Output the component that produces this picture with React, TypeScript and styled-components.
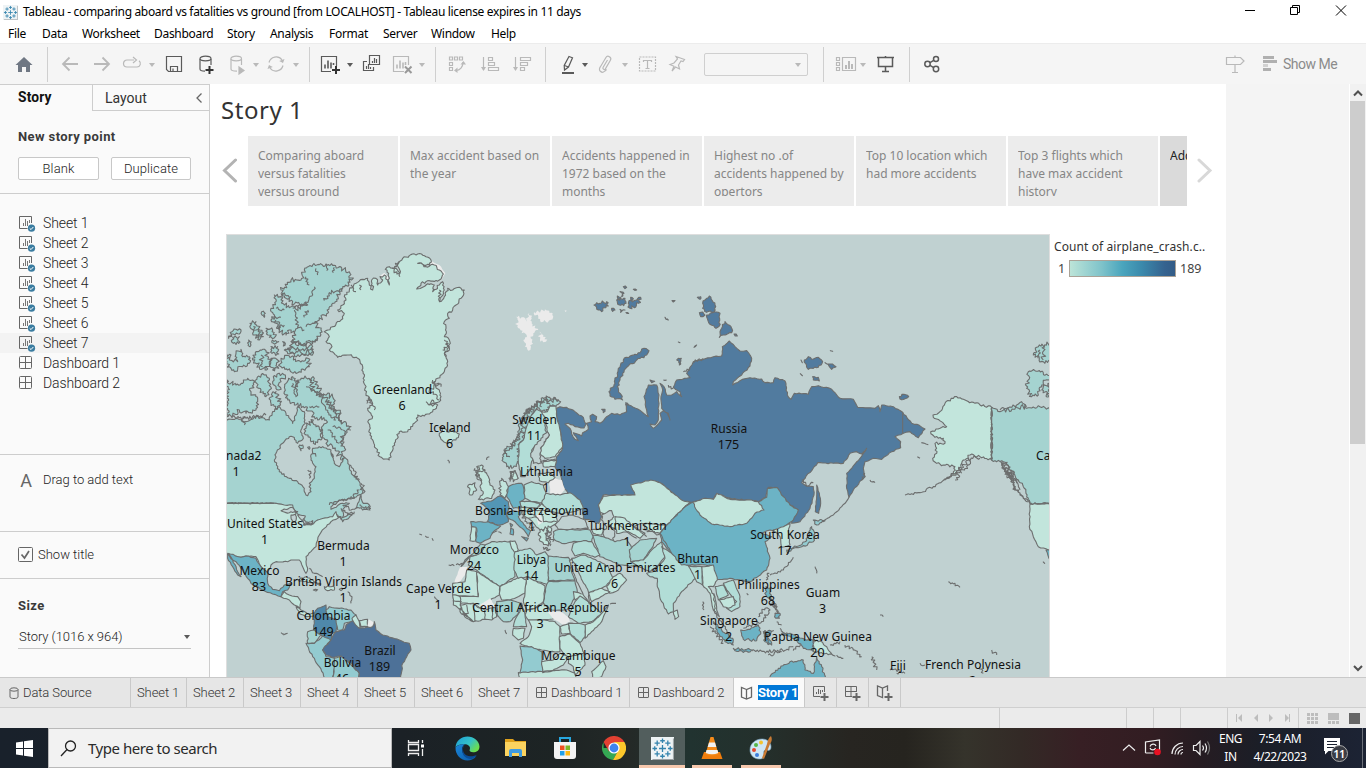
import React from "react";
import styled, { createGlobalStyle, css } from "styled-components";

const Global = createGlobalStyle`
  html, body { margin: 0; padding: 0; background: #fff; overflow: hidden; }
  * { box-sizing: border-box; }
`;

const system = `"Noto Sans", "Open Sans", sans-serif`;
const book = `"Noto Sans", "Open Sans", sans-serif`;
const ui = `Roboto, "Liberation Sans", sans-serif`;

/* ---------- window chrome ---------- */
const Window = styled.div`
  width: 1366px; height: 768px; display: flex; flex-direction: column;
  overflow: hidden; background: #fff; font-family: ${ui}; color: #333;
`;
const TitleBar = styled.div`
  height: 24px; flex: none; display: flex; align-items: center; padding: 0 18px 0 3px;
  font: 12px ${system}; letter-spacing: -0.34px; color: #000;
`;
const TitleText = styled.span`flex: 1; margin: -2px 0 0 5px; white-space: nowrap;`;
const WinButtons = styled.svg`width: 104px; height: 24px; display: block;`;
const MenuBar = styled.div`
  height: 19px; flex: none; display: flex; align-items: center; padding-left: 8px;
  font: 12px ${system}; letter-spacing: -0.3px; color: #000;
`;
const MenuItem = styled.span<{ $w: number }>`width: ${(p) => p.$w}px; white-space: nowrap;`;

/* ---------- toolbar ---------- */
const Toolbar = styled.div`
  height: 41px; flex: none; display: flex; align-items: center;
  background: #f5f5f5; border-top: 1px solid #ececec;
`;
const Tool = styled.svg<{ $ml: number; $dim?: boolean }>`
  width: 22px; height: 22px; flex: none; display: block; margin-left: ${(p) => p.$ml}px;
  fill: none; stroke: ${(p) => (p.$dim ? "#b9b9b9" : "#5a5a5a")}; stroke-width: 1.2;
`;
const Caret = styled.i<{ $ml: number; $dim?: boolean }>`
  flex: none; width: 6px; height: 0; margin: 1px 1px 0 ${(p) => p.$ml}px;
  border: 3px solid transparent; border-bottom: 0;
  border-top: 4px solid ${(p) => (p.$dim ? "#b9b9b9" : "#5a5a5a")};
`;
const Sep = styled.i<{ $ml: number }>`
  width: 1px; height: 35px; flex: none; background: #cfcfcf; margin-left: ${(p) => p.$ml}px;
`;
const FitSelect = styled.div`
  width: 104px; height: 23px; margin-left: 16px; flex: none; border: 1px solid #cfcfcf; border-radius: 2px;
  display: flex; align-items: center; justify-content: flex-end; padding-right: 5px;
`;
const ShowMe = styled.div`
  display: flex; align-items: center; gap: 6px; margin: 0 28px 0 17px;
  font: 14px ${ui}; color: #8b8b8b; letter-spacing: -0.5px; white-space: nowrap;
`;

/* ---------- side panel ---------- */
const Main = styled.div`flex: 1; min-height: 0; display: flex; background: #fff;`;
const Side = styled.aside`
  width: 210px; flex: none; background: #fafafa; border-right: 1px solid #cdcdcd;
  display: flex; flex-direction: column;
`;
const PaneTabs = styled.div`display: flex; height: 27px; flex: none; border-top: 1px solid #cdcdcd;`;
const PaneTab = styled.div<{ $on?: boolean }>`
  display: flex; align-items: center; font-size: 14px; padding-bottom: 1px;
  ${(p) => p.$on
    ? css`width: 92px; padding: 0 0 2px 18px; font-weight: 700; color: #111; font-size: 13.8px; letter-spacing: 0.15px;`
    : css`flex: 1; padding: 0 6px 0 12px; border-left: 1px solid #cdcdcd; border-bottom: 1px solid #cdcdcd;
          justify-content: space-between; color: #333; background: #fafafa;`}
`;
const Heading = styled.h3`
  margin: 0; font: 700 13px/17px ${ui}; color: #3a3a3a; letter-spacing: 0.4px;
`;
const NewPoint = styled.section`
  height: 83px; flex: none; padding: 17px 18px 0; border-bottom: 1px solid #cdcdcd;
`;
const Buttons = styled.div`display: flex; gap: 12px; margin-top: 12px;`;
const PointButton = styled.button<{ $w: number }>`
  width: ${(p) => p.$w}px; height: 23px; padding: 0 0 1px; background: #fff; border: 1px solid #c8c8c8; border-radius: 2px;
  font: 300 13px ${ui}; color: #222; letter-spacing: 0.1px;
`;
const SheetList = styled.ul`
  list-style: none; margin: 0; padding: 19px 0 0; height: 261px; flex: none; border-bottom: 1px solid #cdcdcd;
`;
const SheetRow = styled.li<{ $hover?: boolean }>`
  height: 20px; display: flex; align-items: center; gap: 7px; padding-left: 18px;
  font-size: 14px; font-weight: 300; letter-spacing: -0.1px; color: #222; background: ${(p) => (p.$hover ? "#f3f3f3" : "none")};
  svg { width: 18px; height: 18px; }
`;
const DragText = styled.section`
  height: 77px; flex: none; padding: 17px 0 0 19px; display: flex; align-items: flex-start; gap: 10px;
  border-bottom: 1px solid #cdcdcd; font-size: 13px; font-weight: 300; line-height: 16px; letter-spacing: -0.02px; color: #222;
`;
const BigA = styled.span`font: 18px/17px ${ui}; width: 14px; text-align: center; color: #666;`;
const ShowTitle = styled.section`
  height: 47px; flex: none; display: flex; align-items: center; gap: 5px; padding: 0 0 1px 18px;
  border-bottom: 1px solid #cdcdcd; font-size: 13px; font-weight: 300; color: #222;
`;
const SizeBox = styled.section`padding: 18px 18px 0; flex: 1;`;
const SizeSelect = styled.div`
  display: flex; align-items: center; justify-content: space-between; height: 25px; margin-top: 10px;
  border-bottom: 1px solid #c4c4c4; padding-left: 1px; font-size: 13px; font-weight: 300; letter-spacing: -0.05px; width: 173px; color: #222;
`;

/* ---------- story ---------- */
const Story = styled.main`width: 1016px; flex: none; padding-left: 11px; display: flex; flex-direction: column; overflow: hidden;`;
const StoryTitle = styled.h1`
  margin: 8px 0 0; height: 44px; flex: none; font: 400 24px/35px ${book}; color: #333; letter-spacing: 0.55px;
`;
const Navigator = styled.div`display: flex; align-items: center; height: 70px; flex: none;`;
const Arrow = styled.svg`width: 16px; height: 26px; margin-bottom: 2px; fill: none; stroke-width: 3; stroke-linecap: round;`;
const Cards = styled.div`display: flex; gap: 2px; width: 939px; margin: 0 10px 0 11px; overflow: hidden;`;
const Card = styled.div<{ $add?: boolean }>`
  width: 150px; height: 70px; flex: none; padding: 11px 0 0 10px;
  background: ${(p) => (p.$add ? "#dadada" : "#ececec")}; color: ${(p) => (p.$add ? "#222" : "#868686")};
`;
const CardText = styled.div`
  height: 49px; overflow: hidden; font: 12px/18px ${book}; white-space: pre; letter-spacing: -0.01px;
`;
const Board = styled.div`display: flex; margin: 28px 0 0 5px; flex: 1; min-height: 0;`;
const MapFrame = styled.div`width: 824px; flex: none; border: 1px solid #dedede; border-bottom: 0; overflow: hidden;`;
const MapSvg = styled.svg`display: block; width: 822px; height: 442px;`;
const Legend = styled.div`margin: 4px 0 0 4px; font: 12px/17px ${book}; color: #333; white-space: nowrap;`;
const LegendTitle = styled.div`letter-spacing: 0.09px;`;
const Ramp = styled.div`display: flex; align-items: center; gap: 4px; margin-top: 5px; padding-left: 4px; font-size: 12.5px; color: #444; span { width: 7px; }`;
const RampBar = styled.div`
  width: 107px; height: 17px; border: 1px solid #aaa297;
  background: linear-gradient(90deg, #bce4d8 0%, #7fc3ca 30%, #4aa5bd 50%, #3b8aac 68%, #35638f 90%, #335c87 100%);
`;
const Margin = styled.div`flex: 1; background: #f4f4f4; border-right: 1px solid #fff;`;
const Scroll = styled.div`width: 16px; flex: none; background: #f1f1f1; display: flex; flex-direction: column; align-items: center;`;
const Thumb = styled.div`width: 15px; height: 343px; background: #cdcdcd; align-self: flex-start;`;
const ScrollArrow = styled.svg`width: 16px; height: 17px; flex: none; fill: none; stroke: #505050; stroke-width: 2;`;
const ScrollDown = styled(ScrollArrow)`margin-top: auto;`;

/* ---------- sheet tabs and status ---------- */
const SheetTabs = styled.div`
  height: 31px; flex: none; display: flex; background: #e6e6e6; border-top: 1px solid #c9c9c9; border-bottom: 1px solid #cfcfcf;
`;
const SheetTab = styled.div<{ $w: number; $on?: boolean }>`
  width: ${(p) => p.$w}px; flex: none; display: flex; align-items: center; gap: 3px; padding-left: 6px;
  border-right: 1px solid #c9c9c9; font-size: 13px; font-weight: 300; letter-spacing: -0.1px; color: #333; white-space: nowrap;
  background: ${(p) => (p.$on ? "#fafafa" : "none")};
  svg { flex: none; fill: none; stroke: #666; }
`;
const Selected = styled.span`background: #0078d7; color: #fff; font-weight: 700; line-height: 15px; letter-spacing: -0.2px; margin-left: 1px;`;
const Status = styled.div`height: 20px; flex: none; display: flex; justify-content: flex-end; background: #ebebeb;`;
const StatusCell = styled.div<{ $w: number }>`
  width: ${(p) => p.$w}px; border-left: 1px solid #cdcdcd; display: flex; align-items: center;
`;

/* ---------- taskbar ---------- */
const Taskbar = styled.div`
  height: 40px; flex: none; display: flex; color: #fff;
  background: linear-gradient(90deg, #19212b 0, #1b2126 400px, #1d2424 560px, #242927 630px, #213330 690px, #24302c 760px, #272521 850px, #26241f 905px, #35332b 965px, #332a26 1020px, #371f24 1080px, #321d22 1150px, #261c22 1200px, #1b1e27 1260px, #1c2334 1366px);
`;
const Start = styled.div`width: 48px; display: grid; place-items: center;`;
const Search = styled.div`
  width: 344px; background: #f2f2f2; border: 1px solid #b9b9b9; color: #2b2b2b; display: flex; align-items: center;
  padding-left: 11px; gap: 11px; font: 15px ${system}; letter-spacing: -0.47px;
`;
const TaskCell = styled.div<{ $w: number; $on?: boolean; $open?: boolean }>`
  width: ${(p) => p.$w}px; display: grid; place-items: center; background: ${(p) => (p.$on ? "#525e5d" : "none")};
  box-shadow: ${(p) => (p.$open ? "inset 0 -3px #f6c8ad" : "none")};
`;
const Tray = styled.div`margin-left: auto; display: flex; align-items: center; font: 12px/18px ${system}; letter-spacing: -0.45px;`;
const TrayText = styled.div<{ $w: number }>`width: ${(p) => p.$w}px; text-align: center; white-space: nowrap;`;
const Edge = styled.i`width: 1px; height: 40px; background: #6b6f78; margin-right: 3px;`;

/* ---------- map data ---------- */
const tone: Record<string, string> = {
  g: "#c2e5dc", l: "#b2ddd7", c: "#a5d3d0", m: "#93cbd0", b: "#6cb3c5", f: "#5396b5",
  r: "#517b9f", z: "#4d7198", k: "#4f88aa", w: "#ebebeb", o: "#c0d1d1", n: "none",
};
type Shape = [string, number, string];
type Region = { x: number; y: number; shapes: Shape[] };

const noise = (a: number, b: number) => {
  const v = Math.sin(a * 12.9898 + b * 78.233) * 43758.5453;
  return v - Math.floor(v) - 0.5;
};

/** Turns a coarse outline into a coast: every segment is split and nudged sideways. */
const coast = (points: string, amp: number) => {
  const reach = amp >= 6 ? amp * 1.9 : amp >= 4 ? amp * 1.5 : amp * 1.2;
  const stride = amp >= 6 ? 4 : amp >= 4 ? 5 : 7;
  return points.split("|").map((part) => {
    const open = part.includes("~");
    const pts = part.replace("~", "").trim().split(/\s+/).map((p) => p.split(",").map(Number));
    const out: string[] = [];
    pts.forEach((p, i) => {
      out.push(`${p[0]} ${p[1]}`);
      if (open && i === pts.length - 1) return;
      const q = pts[(i + 1) % pts.length];
      const dx = q[0] - p[0], dy = q[1] - p[1];
      const len = Math.hypot(dx, dy);
      const steps = amp ? Math.floor(len / stride) : 0;
      const limit = Math.min(reach, len * 0.6);
      for (let s = 1; s < steps; s++) {
        const t = s / steps;
        const x = p[0] + dx * t, y = p[1] + dy * t;
        const k = noise(Math.round(x), Math.round(y)) * limit;
        out.push(`${(x - (dy / len) * k).toFixed(1)} ${(y + (dx / len) * k).toFixed(1)}`);
      }
    });
    return `M${out.join("L")}${open ? "" : "Z"}`;
  }).join("");
};

const russia =
  "290,385 300,380 320,382 345,395 370,412 378,432 372,444 345,440 325,430 315,432 330,445 335,462 345,478 355,482 348,470 340,458 352,462 365,468 368,458 385,448 380,430 395,425 390,408 398,403 410,410 405,425 420,430 440,410 455,400 480,405 500,395 497,372 520,382 545,395 565,410 560,390 552,350 565,315 590,315 597,345 597,370 595,400 595,420 585,435 570,432 580,445 595,432 605,420 600,400 610,392 625,400 630,420 622,400 605,385 603,350 608,330 600,310 612,320 620,345 635,345 650,335 665,350 660,335 640,322 650,300 690,293 680,280 690,262 700,245 735,236 760,230 785,228 787,200 808,183 825,200 840,213 860,212 875,235 870,258 845,285 820,305 818,315 840,302 870,293 905,297 915,308 940,308 945,293 975,303 982,345 993,358 1003,340 1045,343 1055,320 1075,317 1115,328 1140,355 1180,358 1193,382 1245,385 1255,377 1260,395 1265,375 1300,380 1328,397 1355,430 1378,436 1395,447 1375,473 1350,455 1330,460 1305,470 1322,485 1322,503 1295,515 1265,538 1240,535 1215,545 1210,565 1215,590 1205,600 1180,630 1167,652 1160,625 1160,580 1170,570 1200,535 1220,505 1205,522 1190,515 1170,520 1150,550 1120,550 1073,548 1030,600 1025,608 1040,618 1060,620 1062,645 1050,685 1020,725 995,730 995,712 1015,690 990,675 970,650 950,625 925,622 918,652 895,665 880,662 840,667 810,655 770,642 760,658 735,655 698,667 665,662 640,640 600,608 572,602 515,615 525,645 470,645 430,645 415,675 425,710 415,730 370,715 365,680 330,650 310,620 300,580 285,560 290,530 308,505 300,450 290,410";

const regions: Region[] = [
  {
    x: 226, y: 230, shapes: [
      ["w", 2, "462,138 475,128 492,150 490,172 480,160|610,90 640,105 658,130 645,152 630,140"],
      ["g", 5, "355,200 370,180 390,160 410,148 425,145 430,165 440,180 437,150 450,145 455,165 470,150 462,140 475,135 485,150 490,165 488,130 478,118 490,110 510,115 522,130 515,100 530,85 550,77 575,72 600,80 615,90 610,105 575,100 600,110 625,105 640,120 652,132 640,150 610,152 585,160 572,177 600,165 625,165 620,185 640,165 650,155 655,180 640,215 655,200 665,175 680,180 700,172 715,180 705,205 690,225 680,240 665,250 670,265 655,275 660,295 655,320 670,330 670,360 655,370 665,395 655,425 635,445 620,460 640,480 645,500 640,515 610,525 635,525 620,545 595,558 575,555 570,575 545,605 520,605 505,640 490,690 462,680 450,655 435,625 430,600 428,570 440,560 425,535 440,520 420,490 415,450 410,410 395,385 370,375 335,382 310,360 318,350 300,335 310,320 295,305 320,290 345,270 355,250 335,240 350,225 360,210"],
      ["c", 8, "165,180 195,150 225,150 235,120 260,105 300,102 340,110 372,130 377,150 350,175 320,220 305,250 280,270 265,280 285,300 275,325 260,340 225,345 200,330 205,310 190,300 180,315 160,300 150,280 135,270 145,255 135,235 150,215 145,195 165,200 175,225 210,238 245,225 240,220 205,222 180,205"],
      ["c", 8, "195,335 230,345 260,350 262,370 225,375 190,372 175,360 195,355|165,385 190,378 215,392 245,385 250,410 220,425 185,420 165,410|135,350 155,350 158,372 138,370|135,385 155,390 158,415 140,420|90,365 120,362 130,395 122,420 100,410 80,390|72,280 90,275 100,300 112,320 100,330 80,310|120,295 140,300 148,320 130,322|140,330 158,335 150,340 138,338|170,335 178,340 172,348|20,322 40,320 38,340 22,340|30,298 45,300 40,312 22,312 8,325 18,305|107,245 118,250 115,262 108,255|68,330 75,345 72,350|3,375 15,375 10,390 35,395 30,370 45,358 50,380 70,380 70,400 50,410 25,425 3,412"],
      ["c", 8, "3,450 30,465 50,460 65,445 80,450 75,485 95,510 90,540 60,550 40,540 20,555 3,560|95,440 115,435 130,445 130,480 120,500 105,480 92,460|142,440 160,430 178,435 165,455 158,480 150,470 140,455|138,490 150,485 162,520 155,535 135,520"],
      ["c", 4, "-12,570 30,565 60,575 90,560 130,570 140,545 160,530 180,550 200,580 210,555 215,530 235,545 238,580 225,600 232,625 215,640 200,620 190,620 170,640 150,670 145,690 160,725 190,745 215,755 235,775 235,785 245,797 255,785 250,760 265,745 270,710 255,690 260,655 290,650 315,660 322,680 315,670 325,700 340,710 350,695 350,680 365,690 370,715 380,735 400,755 412,780 410,790 380,805 345,810 315,830 315,838 350,820 370,820 350,840 350,870 335,855 320,860 270,875 255,885 240,875 200,840 150,820 -12,820"],
      ["c", 8, "180,460 200,440 215,470 225,445 265,445 275,465 285,490 320,500 325,530 345,550 345,575 375,590 360,610 345,620 355,650 350,690 320,650 300,640 290,600 300,570 265,560 240,530 210,525 185,510 175,485|240,590 262,570 270,590 290,600 285,630 262,640 240,615|218,650 230,645 225,662|245,652 250,650 250,658"],
      ["c", 5, "395,820 405,795 412,820 430,825 432,840 415,838 390,835|345,865 365,855 380,850 370,862 350,875"],
      ["n", 6, "~ 265,170 260,195 235,225 200,235|~ 240,140 250,165|~ 270,115 275,135|~ 300,105 302,122|~ 325,112 322,128|~ 350,178 310,188 295,212|~ 165,190 195,200|~ 150,235 175,240|~ 140,265 165,262|~ 155,290 175,285|~ 205,240 215,290 205,310|~ 245,240 235,262|~ 215,290 235,300|~ 265,280 240,290|~ 200,460 210,500 215,450|~ 240,470 285,500 300,540 330,570|~ 300,515 322,545 350,580|~ 320,590 350,600|~ 305,600 340,640|~ 375,165 390,185|~ 400,165 405,180|~ 640,180 645,215|~ 640,460 610,480 640,510|~ 430,500 445,540|~ 520,95 500,115 522,140|~ 15,560 60,565 120,555|~ 50,560 55,585|~ 185,355 260,360|~ 280,530 250,530|~ 655,330 665,345 650,360"],
      ["n", 9, "~ 178,362 260,366|~ 275,325 240,342 200,328|~ 285,490 325,535 348,572|~ 250,445 262,480 285,500|~ 352,600 345,650|~ 365,595 375,600|~ 620,450 645,470|~ 668,340 660,380|~ 600,515 630,520|~ 105,375 110,410|~ 82,290 105,320|~ 150,270 162,300|~ 430,505 422,520|~ 665,690 670,700|~ 372,705 400,750|~ 405,760 412,790"],
      ["g", 5, "640,610 650,600 640,592 655,590 662,605 680,600 700,612 690,630 665,640 645,628"],
    ],
  },
  {
    x: 226, y: 450, shapes: [
      ["g", 3, "-12,160 150,160 175,165 200,165 205,180 225,200 235,225 255,225 275,210 320,200 330,185 335,200 345,200 315,215 295,235 280,255 275,270 270,290 240,320 240,335 245,355 240,370 230,350 220,330 195,330 185,335 150,335 135,345 125,370 105,350 90,320 60,318 45,322 -12,310"],
      ["n", 0, "~ 3,160 145,160"],
      ["o", 4, "165,182 195,172 215,185 190,188|195,195 210,190 208,215 198,218|215,195 238,198 230,215 222,205|232,225 260,212 255,222"],
      ["b", 3, "5,310 45,322 60,318 90,325 105,350 125,370 125,400 140,418 160,422 175,405 195,400 185,420 170,425 165,440 140,432 110,420 75,400 65,385 50,360 30,335 20,330|5,312 20,330 35,365 45,380 35,375 20,350 5,325"],
      ["g", 3, "165,440 175,425 190,435 215,440 225,455 222,475 205,465 190,450|210,470 225,480 245,492 270,490 262,498 240,500 222,492"],
      ["k", 3, "265,490 275,475 300,465 300,485 325,500 335,520 330,545 315,550 320,580 300,570 285,555 260,545 265,520"],
      ["m", 3, "300,480 310,470 340,475 375,480 390,495 380,515 355,520 350,540 335,540 330,510 305,500"],
      ["g", 2, "378,505 390,495 400,515 403,535 388,530|400,512 425,508 425,530 405,530"],
      ["w", 1, "428,508 445,518 435,531 424,528"],
      ["c", 3, "245,545 265,540 285,555 265,580 245,580"],
      ["m", 3, "240,580 265,580 290,558 315,570 290,600 300,620 325,625 330,640 320,680 320,700 300,690 280,650 260,620"],
      ["m", 2, "325,625 345,618 375,645 400,670 395,700 320,700 325,650"],
      ["z", 3, "290,600 315,570 330,545 355,540 360,525 380,512 400,535 440,530 445,515 450,540 470,555 520,570 550,580 555,600 530,640 520,700 395,700 400,670 375,640 345,618 325,622 300,615"],
      ["g", 5, "210,390 235,382 260,390 285,402 260,398|295,410 325,410 325,420 300,420|262,420 275,419 270,423|340,418 350,418 345,422"],
      ["n", 4, "~ 250,355 265,370 290,380|~ 365,425 378,440 375,460|~ 580,252 588,255|~ 598,258 608,262|~ 618,265 622,272|~ 668,345 685,347|~ 690,344 710,340|~ 165,548 180,552|~ 172,555 185,550|~ 625,440 635,455"],
      ["n", 6, "~ 310,165 340,150 380,145 400,120|~ 350,165 375,180 390,175|~ 400,165 435,175|~ 345,175 365,195 385,185|~ 245,60 255,70 250,85|~ 260,5 270,20"],
    ],
  },
  {
    x: 460, y: 280, shapes: [
      ["w", 7, "168,110 185,112 200,125 208,100 215,130 235,150 220,160 212,175 213,200 205,212 195,200 190,180 200,165 185,160 172,140|222,95 240,98 255,88 278,100 270,120 250,125 235,110|238,155 250,165 258,185 242,185|314,91 321,92 316,96"],
      ["r", 3, russia],
      ["r", 5, "447,335 465,310 475,265 490,240 510,228 540,218 552,205 567,212 560,225 530,240 500,262 480,300 475,325 488,360 465,358 450,348|570,300 584,304 575,308|425,388 435,388 430,398|497,368 505,375 499,374"],
      ["r", 7, "402,75 420,70 440,65 445,78 425,95 415,90|455,85 465,90 458,94|470,60 495,55 498,70 478,75|480,35 492,40 485,50|490,20 500,22 495,26|505,70 530,60 542,52 535,70 510,85|480,88 495,90 482,97|498,98 506,100|520,28 530,30|512,52 520,56 516,62|472,48 482,52 478,58|636,62 645,62 640,66|712,52 722,50 720,58|615,112 625,120 618,118|655,186 660,188|702,202 710,195|655,235 664,235 658,255"],
      ["r", 4, "728,70 735,60 748,48 765,75 762,95 740,97 728,85|718,98 728,96 735,105 722,110|740,105 758,98 780,100 778,138 768,145 745,125|778,172 785,145 795,125 815,145 815,158 790,165|822,162 832,168|1033,240 1045,230 1055,238 1075,232 1088,245 1075,262 1045,268|1095,248 1110,252 1128,260 1115,268|1058,290 1075,292 1078,303 1060,300|1023,240 1027,248|1111,212 1118,214|1318,350 1332,343 1346,350 1335,356 1320,357"],
      ["n", 0, "~ 1328,397 1328,460"],
      ["n", 3, "~ 1384,488 1405,494|~ 1020,280 1028,288|~ 1372,530 1380,535"],
      ["n", 6, "~ 1025,600 1045,618 1060,608|~ 1205,600 1215,580|~ 700,247 730,235|~ 610,300 620,300|~ 625,315 640,325|~ 670,275 690,265"],
      ["r", 2, "1070,615 1078,640 1082,670 1076,700 1066,695 1070,650"],
      ["c", 9, "128,525 140,505 165,490 175,460 185,430 195,405 215,385 240,365 265,352 285,355 302,365 290,375 270,375 262,395 245,395 230,385 215,405 200,440 190,480 178,490 178,545 160,562 140,560 130,545"],
      ["n", 8, "~ 150,490 165,495|~ 170,465 190,455|~ 180,420 215,405|~ 200,395 230,380|~ 225,372 255,368|~ 250,355 270,372|~ 135,520 150,530|~ 190,400 205,415|~ 205,385 225,395|~ 235,365 245,380|~ 160,480 180,475|~ 130,520 175,480 190,410|~ 195,400 240,365 295,358"],
      ["l", 3, "178,490 190,480 200,440 215,405 230,388 245,395 258,415 255,450 265,462 235,490 215,510 220,530 210,570 195,590 182,590 175,550"],
      ["g", 3, "245,395 262,395 270,378 288,378 290,410 300,450 308,500 285,530 255,535 240,520 245,500 268,465 262,455 258,420"],
      ["o", 4, "262,455 268,465 245,500 240,520 242,545 285,538 270,550 220,550 212,520 225,495"],
      ["g", 3, "250,545 290,540 285,560 250,560|150,575 165,572 172,590 152,598"],
      ["g", 5, "50,560 65,555 82,590 88,610 60,600 55,580"],
      ["n", 6, "~ 80,540 88,530|~ 45,565 58,600|~ 55,560 50,590"],
      ["g", 5, "1419,405 1440,395 1455,370 1480,355 1490,350 1520,362 1560,375 1595,382 1595,540 1560,530 1530,525 1505,550 1490,580 1455,600 1480,580 1485,560 1450,555 1430,550 1418,535 1430,520 1425,490 1455,490 1450,475 1425,472 1412,455 1440,445 1460,440 1420,412"],
      ["c", 5, "1595,382 1620,395 1640,385 1670,375 1685,365 1700,385 1740,380 1790,390 1790,670 1710,670 1690,620 1660,580 1630,545 1595,540"],
      ["n", 0, "~ 1595,382 1595,538"],
      ["c", 7, "1720,225 1735,200 1790,185 1790,240 1750,245|1705,275 1725,272 1770,290 1745,315 1735,345 1715,350 1700,325|1750,320 1768,310 1768,350 1745,330"],
      ["n", 9, "~ 1620,545 1645,580 1665,600|~ 1630,560 1660,590|~ 1485,600 1500,570 1525,535 1560,535|~ 1505,580 1530,540|~ 1740,210 1735,235|~ 1755,200 1750,240|~ 1625,550 1655,600 1665,630|~ 1640,570 1670,610|~ 1630,545 1660,585|~ 1620,390 1700,380"],
    ],
  },
  {
    x: 460, y: 470, shapes: [
      ["g", 5, "50,8 75,0 82,15 90,45 105,60 95,85 55,88 70,70 60,50 65,30|25,45 45,38 50,60 30,75|120,40 125,25 142,45 145,70 135,85 120,75|152,8 165,2 175,25 160,35"],
      ["b", 3, "145,50 165,42 185,40 192,60 195,85 180,95 182,112 160,115 148,90 140,80"],
      ["l", 3, "192,45 215,35 250,45 258,75 250,98 215,95 195,85|180,95 215,95 240,100 230,115 185,112"],
      ["w", 2, "268,35 285,25 305,30 315,58 300,75 270,68"],
      ["g", 3, "235,10 270,8 285,22 265,38 238,32"],
      ["l", 3, "258,70 300,75 330,68 360,90 370,115 340,125 300,130 260,120 245,100"],
      ["f", 3, "62,100 100,90 120,78 145,95 148,115 140,130 145,155 120,165 82,155 90,130 78,112"],
      ["b", 3, "32,155 85,155 122,168 100,185 90,205 60,220 48,215 50,175 35,170"],
      ["g", 3, "34,170 48,172 46,213 30,212"],
      ["b", 3, "140,130 160,122 185,125 175,140 200,175 212,182 205,200 192,180 165,155 145,145|152,175 160,178 160,195 150,192|185,200 205,205 200,213|150,160 158,165 153,172"],
      ["g", 3, "182,112 230,115 245,100 262,120 290,135 290,160 265,175 240,180 225,165 205,145 190,135"],
      ["w", 1, "228,138 240,130 250,155 235,165"],
      ["n", 3, "~ 190,125 225,120 260,122|~ 205,145 225,140 245,155|~ 245,125 250,155 290,155|~ 215,115 210,130 230,140"],
      ["g", 7, "240,180 270,172 275,180 255,190 268,210 265,228 245,215 235,195|250,232 270,238 252,238"],
      ["n", 9, "~ 268,185 278,215|~ 258,180 270,228|~ 185,130 200,155 225,180|~ 160,5 150,35"],
      ["o", 3, "285,165 305,140 335,135 375,150 385,175 345,178 295,178"],
      ["c", 3, "280,185 305,178 345,180 390,180 400,200 395,215 350,215 305,220 282,208"],
      ["l", 3, "95,215 150,215 165,235 165,320 120,350 55,305 25,285 30,260 60,250 75,225"],
      ["c", 2, "3,290 30,260 60,250 75,225 62,222 40,250 15,270"],
      ["w", 1, "-22,350 0,292 22,290 15,315 0,335"],
      ["g", 2, "-22,340 15,335 20,300 50,305 55,380 0,378 -22,375"],
      ["g", 2, "50,305 120,350 118,375 90,390 60,415 40,400 0,400 0,378 55,380"],
      ["g", 2, "120,350 180,320 200,330 195,370 150,390 125,390 118,370"],
      ["g", 2, "150,213 165,213 175,240 165,250 155,235"],
      ["l", 3, "165,245 210,235 230,255 255,245 265,258 265,345 235,335 200,320 175,325 162,300"],
      ["g", 2, "200,320 255,348 250,395 225,415 200,420 190,395 195,370"],
      ["c", 2, "265,258 305,262 325,262 335,275 330,290 345,330 265,332"],
      ["c", 2, "265,335 345,332 352,365 335,400 320,420 275,420 250,400 258,350"],
      ["g", 2, "200,420 225,415 250,400 275,425 285,445 245,450 205,450 195,435"],
      ["w", 2, "262,425 300,425 325,440 330,455 310,465 285,450|60,405 90,385 105,410 75,420"],
      ["c", 2, "110,395 150,390 185,400 175,430 150,455 130,455 112,435"],
      ["l", 2, "185,400 195,435 200,470 160,470 165,450 180,425"],
      ["g", 3, "0,405 40,400 60,415 75,420 105,412 110,440 95,450 75,448 40,455 15,435|0,415 20,435 40,455 20,445 0,425|-22,375 0,380 5,420 -20,405"],
      ["n", 2, "~ 40,400 45,455|~ 75,420 75,450|~ 95,412 98,448|~ 105,410 112,440|~ 20,405 25,430 5,432|~ -22,392 5,395"],
      ["l", 2, "345,395 360,375 385,395 425,430 395,455 355,460 325,440"],
      ["g", 2, "425,430 445,405 425,455 375,505 375,465 400,455|340,365 370,372 385,395 360,378 345,390"],
      ["g", 2, "205,450 245,450 285,455 300,470 298,510 300,545 270,545 245,540 215,535 180,520 205,500 215,470"],
      ["g", 2, "160,475 195,475 190,505 175,510 158,495"],
      ["l", 2, "325,460 355,460 375,465 375,500 360,518 330,490"],
      ["g", 2, "300,470 325,462 330,490 305,492|298,500 330,492 360,520 372,550 355,560 320,560 300,535"],
      ["m", 2, "180,528 215,530 245,545 248,610 180,608 188,570"],
      ["g", 2, "245,575 280,570 300,550 325,560 310,585 270,605 248,608|325,560 372,550 375,585 345,615 340,590 325,580|175,608 320,600 345,610 350,630 180,630|395,605 430,572 438,590 425,620 400,630"],
      ["g", 3, "415,105 430,78 470,75 525,75 512,45 572,30 600,38 640,70 665,90 690,97 670,115 650,150 620,165 580,165 545,160 520,170 490,150 468,148 470,175 440,170 445,140 420,125"],
      ["o", 4, "425,135 455,122 462,140 445,160 465,185 460,210 440,215 430,185 440,170 425,150"],
      ["g", 3, "465,140 495,145 520,168 555,190 540,205 505,185 470,190|555,160 600,165 620,165 600,190 555,180|395,180 430,175 425,195 400,190"],
      ["n", 3, "~ 475,165 500,185 530,205|~ 520,170 560,200|~ 570,175 590,195 610,185|~ 560,185 585,185"],
      ["c", 3, "398,195 430,200 465,215 500,205 515,235 510,260 530,290 480,285 445,270 420,260"],
      ["c", 2, "508,240 540,210 590,205 575,235 550,270 512,275"],
      ["l", 2, "512,275 550,270 580,235 605,215 615,260 590,290 570,305 535,290"],
      ["l", 2, "340,220 370,212 395,215 420,255 405,262 370,250 345,258 335,240"],
      ["l", 3, "335,265 370,255 420,275 445,290 460,330 425,355 385,368 365,345 345,300"],
      ["g", 3, "385,370 425,355 450,365 395,395|460,320 480,310 500,330 475,360 450,370 440,350"],
      ["o", 3, "328,272 336,268 385,365 388,402 370,375 350,335"],
      ["b", 3, "600,190 640,145 670,115 692,97 710,105 720,100 720,280 690,285 665,270 635,250 605,215"],
      ["l", 3, "592,290 615,265 605,230 635,250 670,280 700,290 720,290 720,320 700,330 665,365 640,400 640,425 625,432 605,395 592,350 592,325 570,320 560,310 580,305"],
      ["g", 2, "640,425 652,420 656,440 645,448"],
      ["n", 4, "~ 95,190 112,182|~ 115,185 125,190|~ 450,402 468,400|~ 135,480 140,492"],
    ],
  },
  {
    x: 690, y: 470, shapes: [
      ["b", 3, "-90,190 -50,145 -20,115 8,97 45,90 120,85 205,95 230,82 232,55 262,53 280,80 300,105 325,120 310,150 270,180 240,180 215,190 245,200 225,215 240,265 230,300 180,335 120,325 75,330 60,285 20,285 -25,285 -55,250"],
      ["g", 3, "8,97 45,85 70,88 80,70 120,88 185,90 205,95 222,120 195,130 170,160 120,170 65,162 30,135"],
      ["g", 2, "250,180 280,170 300,160 295,185 300,225 275,232 270,200"],
      ["m", 5, "370,150 405,152 380,165|365,170 375,190 370,215 330,232 305,238 295,250 290,240 325,228 350,212"],
      ["n", 3, "~ 477,82 455,110 430,135 400,155"],
      ["g", 3, "35,290 70,285 82,330 70,350 55,350 75,380 80,420 88,440 70,420 60,370 38,345"],
      ["l", 2, "75,350 100,345 115,375 85,390|100,340 130,330 150,380 150,410 125,425 110,415 140,395 110,360"],
      ["l", 2, "-5,288 35,290 38,345 20,335 5,305"],
      ["g", 2, "88,390 130,380 135,405 115,415 100,410"],
      ["n", 4, "~ 72,370 75,430 110,480 130,520|~ 38,395 42,420|~ 240,315 280,300 310,262|~ 375,290 380,310|~ 170,370 175,375"],
      ["b", 5, "70,455 95,480 128,505 130,525 105,515 85,490|130,535 185,540 180,546 135,542|152,480 180,478 205,465 212,485 200,512 160,508|228,350 242,355 240,385 228,375|255,430 270,430 268,445 258,445|220,485 250,482 230,495 245,525 225,515"],
      ["n", 6, "~ 205,440 225,415 240,420 215,455 160,475|~ 185,543 260,545 310,530|~ 250,395 265,425 255,430|~ 240,400 262,410|~ 260,455 275,465|~ 60,470 100,520|~ 235,555 275,545|~ 310,542 330,520|~ 270,475 285,490|~ 228,330 232,310 238,310|~ 240,385 268,430|~ 250,400 262,425|~ 225,480 235,525"],
      ["b", 4, "275,490 300,490 335,505 370,512 370,545 340,535 320,510"],
      ["g", 4, "370,512 395,515 415,540 435,558 410,550 372,545"],
      ["n", 6, "~ 420,525 450,515|~ 465,525 490,540 515,560|~ 440,555 460,565|~ 545,560 560,600|~ 620,610 645,610|~ 600,600 630,600|~ 690,580 705,585|~ 905,540 920,555|~ 870,590 880,610|~ 775,335 795,340 810,352|~ 570,435 580,440|~ 540,30 555,38"],
      ["b", 4, "240,620 265,595 300,575 340,570 345,600 370,610 380,560 395,590 410,640 240,640"],
      ["n", 5, "~ 645,75 690,68 730,50 775,25 815,-5|~ 945,0 960,25 975,60 1000,85 1030,105|~ 950,5 970,40 990,75 1025,100|~ 960,0 990,60"],
      ["g", 3, "1020,102 1100,100 1100,240 1075,240 1045,230 1030,200 1018,170"],
      ["n", 0, "~ 1035,101 1090,101"],
      ["b", 2, "1068,240 1080,240 1080,270|1060,276 1064,280"],
    ],
  },
];

const labels: [number, number, string, string][] = [
  [402.5, 394, "Greenland", "6"], [450, 432, "Iceland", "6"], [534.5, 424, "Sweden", "11"],
  [546.5, 476, "Lithuania", "1"], [532, 515, "Bosnia-Herzegovina", "1"], [627.5, 530, "Turkmenistan", "1"],
  [474.5, 554, "Morocco", "24"], [531.5, 564, "Libya", "14"], [615, 572, "United Arab Emirates", "6"],
  [438.5, 593, "Cape Verde", "1"], [540.5, 612, "Central African Republic", "3"], [578.5, 660, "Mozambique", "5"],
  [236.5, 460, "Canada2", "1"], [265, 528, "United States", "1"], [343.5, 550, "Bermuda", "1"],
  [259.500, 575, "Mexico", "83"], [343.5, 586, "British Virgin Islands", "1"], [323.5, 620, "Colombia", "149"],
  [380, 655, "Brazil", "189"], [342.5, 667, "Bolivia", "46"], [729, 433, "Russia", "175"],
  [785, 539, "South Korea", "17"], [698, 563, "Bhutan", "1"], [768.5, 589, "Philippines", "68"],
  [823, 597, "Guam", "3"], [729, 625, "Singapore", "2"], [818, 641, "Papua New Guinea", "20"],
  [898, 670, "Fiji", "1"], [973, 669, "French Polynesia", "2"], [1061, 460, "Canada2", ""],
];

const WorldMap = () => (
  <MapSvg viewBox="227 235 822 442">
    <rect x="227" y="235" width="822" height="442" fill={tone.o} />
    <g stroke="#6c6e6e" strokeLinejoin="round">
      {regions.map((r, i) => (
        <g key={i} transform={`translate(${r.x} ${r.y}) scale(.33333)`}>
          {r.shapes.map(([t, amp, pts], k) => (
            <path key={k} d={coast(pts, amp)} fill={tone[t]} stroke={t === "w" ? "none" : undefined}
              strokeWidth={1.1} vectorEffect="non-scaling-stroke" />
          ))}
        </g>
      ))}
    </g>
    <g fontFamily={book} fontSize="12" fill="#111" textAnchor="middle" letterSpacing=".06">
      {labels.map(([x, y, name, n], i) => (
        <React.Fragment key={i}>
          <text x={x} y={y}>{name}</text>
          <text x={x - 0.5} y={y + 16} fontSize="12.500">{n}</text>
        </React.Fragment>
      ))}
    </g>
  </MapSvg>
);

/* ---------- icons ---------- */
const tableauMarks: [number, number, number][] = [
  [8, 8, 2.4], [8, 2.6, 1.6], [8, 13.4, 1.6], [2.6, 8, 1.6], [13.4, 8, 1.6],
  [4.3, 4.3, 1.8], [11.7, 4.3, 1.8], [4.3, 11.7, 1.8], [11.7, 11.7, 1.8],
];
const TableauMark = ({ size }: { size: number }) => (
  <svg width={size} height={size} viewBox="0 0 16 16">
    <rect width="16" height="16" fill="#eef3f5" />
    <path d="M15.6 1V15.6H1" fill="none" stroke="#9aa0a3" strokeWidth=".7" />
    <path d={tableauMarks.map(([x, y, r]) => `M${x - r} ${y}h${2 * r}M${x} ${y - r}v${2 * r}`).join("")} stroke="#3484ad" strokeWidth=".9" />
  </svg>
);
const SheetIcon = () => (
  <svg viewBox="0 0 18 18" fill="none">
    <path d="M9.500 14.500H1.500V2.500H13.500V9" stroke="#666" />
    <path d="M5.500 12V9M7.500 12V5M9.500 12V7M11.500 9V6" stroke="#777" />
    <circle cx="13.500" cy="14.200" r="3.600" fill="#3a7ca0" />
    <path d="M11.700 14.300l1.300 1.300 2.300-2.600" stroke="#fff" />
  </svg>
);
const GridIcon = ({ size = 18 }: { size?: number }) => (
  <svg width={size} height={size} viewBox={size === 18 ? "0 0 18 18" : "1 1 14 14"} fill="none" stroke="#666">
    {size === 18
      ? <><rect x="1.500" y="2.500" width="12" height="12" rx="1" /><path d="M7.500 2.500v12M1.500 8.500h12" /></>
      : <><rect x="3.500" y="2.500" width="10" height="10" rx=".5" /><path d="M8.500 2.500v10M3.500 7.500h10" /></>}
  </svg>
);

const sheets = ["Sheet 1", "Sheet 2", "Sheet 3", "Sheet 4", "Sheet 5", "Sheet 6", "Sheet 7"];
const points = [
  "Comparing aboard\nversus fatalities\nversus ground", "Max accident based on\nthe year",
  "Accidents happened in\n1972 based on the\nmonths", "Highest no .of\naccidents happened by\nopertors",
  "Top 10 location which\nhad more accidents", "Top 3 flights which\nhave max accident\nhistory",
];
const menus: [string, number][] = [
  ["File", 34], ["Data", 40], ["Worksheet", 72], ["Dashboard", 73], ["Story", 43], ["Analysis", 59],
  ["Format", 54], ["Server", 48], ["Window", 60], ["Help", 40],
];

const ToolIcons = () => (
  <Toolbar>
    <Tool $ml={13}><path d="M2.500 12L11 4l8.500 8H17v7h-4v-5H9v5H5v-7z" fill="#6f7783" stroke="none" /></Tool>
    <Sep $ml={12} />
    <Tool $ml={11} $dim><path d="M19 11H4M10.500 4.500L4 11l6.500 6.500" strokeWidth="1.800" /></Tool>
    <Tool $ml={10} $dim><path d="M3 11h15M11.500 4.500L18 11l-6.500 6.500" strokeWidth="1.800" /></Tool>
    <Tool $ml={8} $dim><path d="M13 7H6a3.500 3.500 0 0 0 0 7h10a3.500 3.500 0 0 0 2-6.300M12 4l3.500 3-3.500 3" /></Tool>
    <Caret $ml={6} $dim />
    <Tool $ml={7}><path d="M3.500 3.500h15v15h-13l-2-2zM7.500 18v-4.500h7V18M10 18v-2.500" /></Tool>
    <Tool $ml={10}><path d="M5 6v10c0 1.500 2 2.200 5 2.200M16 6v6" /><ellipse cx="10.500" cy="5.500" rx="5.500" ry="2.300" /><path d="M14.500 13v8M10.500 17h8" strokeWidth="2" stroke="#333" /></Tool>
    <Tool $ml={9} $dim><path d="M5 6v10c0 1.500 2 2.200 6 2.200M15.500 6v6" /><ellipse cx="10.200" cy="5.500" rx="5.300" ry="2.300" /><path d="M13 14l5 3.500-5 3.500z" fill="#b9b9b9" /></Tool>
    <Caret $ml={5} $dim />
    <Tool $ml={5} $dim><path d="M4 9.500A7.300 7.300 0 0 1 17 7M18 12.500A7.300 7.300 0 0 1 5 15" /><path d="M19.500 6l-1.500 4-3.800-2zM2.500 16l1.500-4 3.800 2z" fill="#b9b9b9" stroke="none" /></Tool>
    <Caret $ml={6} $dim />
    <Sep $ml={9} />
    <Tool $ml={9}><path d="M12 18.500H2.500v-15h15V13" /><path d="M6 15.500v-4M9 15.500v-8M12 15.500v-6M14.500 12V10" strokeWidth="1.600" /><path d="M17 13v8M13 17h8" strokeWidth="2" stroke="#333" /></Tool>
    <Caret $ml={6} />
    <Tool $ml={6}><path d="M9.500 2.500h10v9h-10zM7 8.500H3.500v9h10V14M12.500 10V8M14.500 10V5M16.500 10V6M6.500 16v-3M8.500 16v-5M10.500 16v-2" /></Tool>
    <Tool $ml={10} $dim><path d="M12 18.500H1.500v-15h15V12" /><path d="M5 15.500v-4M8 15.500v-8M11 15.500v-6M13.500 12V9" strokeWidth="1.600" /><path d="M13 13.500l6.500 6.500M19.500 13.500L13 20" strokeWidth="2" stroke="#999" /></Tool>
    <Caret $ml={5} $dim />
    <Sep $ml={9} />
    <Tool $ml={10} $dim><path d="M3.500 4h3v3h-3zM8.500 4h3v3h-3zM13.500 4h3v3h-3zM3.500 9.500h3v3h-3zM3.500 14.500h3v3h-3zM17 9c0 5-3 8.500-7 8.500" /><path d="M14.500 11.500L17.500 8l2.500 3.500zM11.500 14.500L8 17.500l3.500 2.500z" fill="#b9b9b9" stroke="none" /></Tool>
    <Tool $ml={11} $dim><path d="M4.500 4v13M9.500 4.500h4v3h-4zM9.500 9.500h6v3h-6zM9.500 14.500h10v3h-10z" /><path d="M2 14h5l-2.500 4z" fill="#b9b9b9" stroke="none" /></Tool>
    <Tool $ml={10} $dim><path d="M4.500 4v13M9.500 4.500h10v3h-10zM9.500 9.500h7v3h-7zM9.500 14.500h4v3h-4z" /><path d="M2 14h5l-2.500 4z" fill="#b9b9b9" stroke="none" /></Tool>
    <Sep $ml={12} />
    <Tool $ml={11}><path d="M12 3.500l3.500 1.300L11.500 14 7.500 17l-.3-4.500zM7.500 12.500l4 1.500" /><path d="M5 20h12" strokeWidth="2" /></Tool>
    <Caret $ml={3} />
    <Tool $ml={5} $dim><path d="M13.500 7L9 14.500a1.400 1.400 0 0 0 2.400 1.400l5-8.600a2.600 2.600 0 0 0-4.600-2.600L6.300 14a3 3 0 0 0 4.300 4.200l2-1.700" /></Tool>
    <Caret $ml={6} $dim />
    <Tool $ml={7} $dim><rect x="3.500" y="4" width="16" height="14" strokeDasharray="2 1" /><path d="M7.500 9V7.500h8V9M11.500 7.500v8M9.500 15.500h4" /></Tool>
    <Tool $ml={8} $dim><path d="M10 3.500l8.500 3-1.500 2-2-.5-2.500 4 1 4-4-2L6 18l2-4.700L4 11.500l4-1.500 3.500-4z" /></Tool>
    <FitSelect><Caret $ml={0} $dim /></FitSelect>
    <Sep $ml={15} />
    <Tool $ml={11} $dim><path d="M1.500 4.500h3v3h-3zM1.500 9.500h3v3h-3zM1.500 14.500h3v3h-3zM7.500 4.500h13v13h-13z" /><path d="M11 16v-4M14 16V8M17 16v-5" strokeWidth="2" /></Tool>
    <Caret $ml={3} $dim />
    <Tool $ml={7}><path d="M3 4.500h17M4.500 4.500v9h14v-9M11.500 3v1.500M11.500 13.500v5M8 18.500h7" strokeWidth="1.500" /></Tool>
    <Sep $ml={13} />
    <Tool $ml={11}><g strokeWidth="1.500"><circle cx="6.500" cy="11" r="2.700" /><circle cx="15" cy="6" r="2.500" /><circle cx="15" cy="16" r="2.700" /><path d="M9 9.600l3.700-2.200M9 12.400l3.700 2.200" /></g></Tool>
    <Tool $ml={281} $dim><path d="M2.500 4.500h14l3.500 3.500-3.500 3.500h-14zM11 2.500v2M11 11.500v7.500M8 19.500h6" /></Tool>
    <ShowMe>
      <svg width="14" height="16" viewBox="0 0 14 16"><path d="M0 0h11v3H0zM0 4h14v3H0zM0 12h8v3H0z" fill="#b0b0b0" /><path d="M0 8h5v3H0z" fill="#d2d2d2" /></svg>
      Show Me
    </ShowMe>
  </Toolbar>
);

const TaskIcons = () => (
  <>
    <TaskCell $w={48}>
      <svg width="19" height="18" fill="none" stroke="#eee" strokeWidth="1.300"><path d="M1.500 1v2.500h10V1M1.500 5.500h10v6h-10zM1.500 17v-2.500h10V17M15.500 1v3M15.500 10v7" /><path d="M14 5.500h3v3h-3z" fill="#fff" stroke="none" /></svg>
    </TaskCell>
    <TaskCell $w={55}>
      <svg width="25" height="25" viewBox="0 0 24 24">
        <defs>
          <linearGradient id="eg" x1="0" y1="0" x2="1" y2=".6"><stop offset="0" stopColor="#1c9fd8" /><stop offset=".6" stopColor="#35c1c8" /><stop offset="1" stopColor="#6cde4e" /></linearGradient>
          <linearGradient id="eb" x1="0" y1="0" x2="1" y2="1"><stop offset="0" stopColor="#1a86d9" /><stop offset="1" stopColor="#0c5aa8" /></linearGradient>
        </defs>
        <path d="M.5 11C1 4.500 6 .5 12 .5S23.500 5 23.500 10c0 4-3 5.500-6 5.500-2.500 0-4-1-3.500-2 1-1.500.5-5-4-5.500C6 7.500 2 8.500.500 11z" fill="url(#eg)" />
        <path d="M.5 11C2 8.500 6 7.300 9.500 8c-3 1.500-3.500 6-1.500 9s7 4 12.500 2.500C18 22.500 15 23.500 12 23.500 5.500 23.500.200 18 .500 11z" fill="url(#eb)" />
        <path d="M9.500 8.500c-3 3-2 7 0 9 3 2.500 8 2.500 11.500.500-1.500 2-3 3.200-5 4-5 .500-9-3-9-7.500 0-3 1-5 2.500-6z" fill="#0a4c98" />
      </svg>
    </TaskCell>
    <TaskCell $w={42}>
      <svg width="22" height="20"><path d="M0 1h8l2 2h11v4H0z" fill="#e0a21c" /><path d="M0 4h21v14H0z" fill="#fbd35f" /><path d="M4 19v-6q0-2 2-2h9q2 0 2 2v6h-3v-4H7v4z" fill="#3f9be0" /></svg>
    </TaskCell>
    <TaskCell $w={55}>
      <svg width="24" height="24"><path d="M7 6V2h10v4" fill="none" stroke="#28a7e0" strokeWidth="2" /><path d="M1 6h22v14q0 3-3 3H4q-3 0-3-3z" fill="#f3f3f3" /><path d="M7 9.500h4.500V14H7z" fill="#ee5022" /><path d="M12.500 9.500H17V14h-4.500z" fill="#7db928" /><path d="M7 15h4.500v4.500H7z" fill="#1f9fe8" /><path d="M12.500 15H17v4.500h-4.500z" fill="#fcb813" /></svg>
    </TaskCell>
    <TaskCell $w={44}>
      <svg width="24" height="24" viewBox="0 0 24 24"><path d="M12 12H1.600V6A12 12 0 0 0 11 24l5-9z" fill="#35a853" /><path d="M12 6h10.400A12 12 0 0 1 11 24l5.500-10z" fill="#fcc72b" /><path d="M1.600 6L7 15.500 12 6h10.400A12 12 0 0 0 1.600 6z" fill="#e24132" /><circle cx="12" cy="12" r="5.600" fill="#fff" /><circle cx="12" cy="12" r="4.400" fill="#3e83ee" /></svg>
    </TaskCell>
    <TaskCell $w={3} />
    <TaskCell $w={46} $on $open><TableauMark size={23} /></TaskCell>
    <TaskCell $w={7} />
    <TaskCell $w={40} $open>
      <svg width="22" height="24"><path d="M3 16h16l2.500 7H.500z" fill="#f07d0c" /><path d="M9.500 1h3l5 17q-6.500 3-13 0z" fill="#f58b1a" /><path d="M8 6.500h6l1.300 4.500H6.700zM5.500 14h11l.8 3q-6.300 2.600-12.600 0z" fill="#f2f2f2" /></svg>
    </TaskCell>
    <TaskCell $w={9} />
    <TaskCell $w={40} $open>
      <svg width="26" height="26"><path d="M2 15C2 8 8 4 14 4c5 0 9 3 9 8 0 3-2 4-4 3s-4 1-3 4-1 5-5 5c-5 0-9-4-9-9z" fill="#cfe6f4" stroke="#7faac6" strokeWidth=".6" /><circle cx="6" cy="15" r="2" fill="#e6482e" /><circle cx="8" cy="10" r="2" fill="#55b748" /><circle cx="13" cy="7.500" r="2" fill="#f4c430" /><circle cx="9" cy="20" r="2" fill="#3d7edb" /><path d="M23 1q2 4-1 8l-6 15-2-1 5-14q1-6 4-8z" fill="#c97b35" /></svg>
    </TaskCell>
  </>
);

export default function App() {
  return (
    <Window>
      <Global />
      <TitleBar>
        <TableauMark size={15} />
        <TitleText>Tableau - comparing aboard vs fatalities vs ground [from LOCALHOST] - Tableau license expires in 11 days</TitleText>
        <WinButtons viewBox="0 0 104 24" fill="none" stroke="#000">
          <path d="M1 10.500h10" /><path d="M46.500 7.500h7v7h-7zM48.500 7.500v-2h7v7h-2" /><path d="M92 5.500l10 10M102 5.500l-10 10" />
        </WinButtons>
      </TitleBar>
      <MenuBar>{menus.map(([m, w]) => <MenuItem key={m} $w={w}>{m}</MenuItem>)}</MenuBar>
      <ToolIcons />
      <Main>
        <Side>
          <PaneTabs>
            <PaneTab $on>Story</PaneTab>
            <PaneTab>Layout<svg width="8" height="12" fill="none" stroke="#666" strokeWidth="1.300"><path d="M6.500 1.500L2 6l4.500 4.500" /></svg></PaneTab>
          </PaneTabs>
          <NewPoint>
            <Heading>New story point</Heading>
            <Buttons><PointButton $w={81}>Blank</PointButton><PointButton $w={80}>Duplicate</PointButton></Buttons>
          </NewPoint>
          <SheetList>
            {sheets.map((s, i) => <SheetRow key={s} $hover={i === 6}><SheetIcon />{s}</SheetRow>)}
            {["Dashboard 1", "Dashboard 2"].map((s) => <SheetRow key={s}><GridIcon />{s}</SheetRow>)}
          </SheetList>
          <DragText><BigA>A</BigA>Drag to add text</DragText>
          <ShowTitle>
            <svg width="15" height="15" fill="none" stroke="#666"><rect x=".5" y=".5" width="14" height="14" rx="1" /><path d="M3.500 7.500l3 3.500 4.500-7" strokeWidth="1.700" /></svg>
            Show title
          </ShowTitle>
          <SizeBox>
            <Heading>Size</Heading>
            <SizeSelect>Story (1016 x 964)<Caret $ml={0} /></SizeSelect>
          </SizeBox>
        </Side>
        <Story>
          <StoryTitle>Story 1</StoryTitle>
          <Navigator>
            <Arrow stroke="#b3b3b3" viewBox="0 0 16 26"><path d="M14.500 3L3.500 13.500 14.500 24" /></Arrow>
            <Cards>
              {points.map((p) => <Card key={p}><CardText>{p}</CardText></Card>)}
              <Card $add><CardText>Add a caption</CardText></Card>
            </Cards>
            <Arrow stroke="#d8d8d8" viewBox="0 0 16 26"><path d="M2 3L13 13.500 2 24" /></Arrow>
          </Navigator>
          <Board>
            <MapFrame><WorldMap /></MapFrame>
            <Legend>
              <LegendTitle>Count of airplane_crash.c..</LegendTitle>
              <Ramp><span>1</span><RampBar />189</Ramp>
            </Legend>
          </Board>
        </Story>
        <Margin />
        <Scroll>
          <ScrollArrow><path d="M4 11.500l4-4 4 4" /></ScrollArrow>
          <Thumb />
          <ScrollDown><path d="M4 6l4 4 4-4" /></ScrollDown>
        </Scroll>
      </Main>
      <SheetTabs>
        <SheetTab $w={131}>
          <svg width="14" height="14"><ellipse cx="8" cy="3.500" rx="4" ry="1.700" /><path d="M4 3.500v7.500c0 2 8 2 8 0V3.500" /></svg>Data Source
        </SheetTab>
        {sheets.map((s, i) => <SheetTab key={s} $w={[56, 57, 57, 57, 57, 57, 56][i]}>{s}</SheetTab>)}
        <SheetTab $w={102}><GridIcon size={14} />Dashboard 1</SheetTab>
        <SheetTab $w={104}><GridIcon size={14} />Dashboard 2</SheetTab>
        <SheetTab $w={71} $on><svg width="14" height="14"><path d="M6.500 3.500v9M6.500 3.500L1.500 1.500v9.500l5 2 5-2V1.500z" strokeWidth="1.300" /></svg><Selected>Story 1</Selected></SheetTab>
        <SheetTab $w={32}><svg width="19" height="18"><path d="M9 12.500H2.500v-10h11V8M5.500 10V8M7.500 10V5M9.500 10V6M11.500 8V6" /><path d="M13.500 9v8M9.500 13h8" strokeWidth="2" /></svg></SheetTab>
        <SheetTab $w={32}><svg width="19" height="18"><path d="M9 12.500H2.500v-10h11V8M8 2.500v10M2.500 7.500h11" /><path d="M13.500 9v8M9.500 13h8" strokeWidth="2" /></svg></SheetTab>
        <SheetTab $w={32}><svg width="19" height="18"><path d="M7.500 4v9.500l-5-2V2l5 2 5-2v5" strokeWidth="1.300" /><path d="M13.500 9v8M9.500 13h8" strokeWidth="2" /></svg></SheetTab>
      </SheetTabs>
      <Status>
        {[127, 27, 27, 47].map((w, i) => <StatusCell key={i} $w={w} />)}
        <StatusCell $w={71}>
          <svg width="70" height="12" fill="#bdbdbd"><path d="M8 2h1v8H8zM14 2v8l-4-4zM30 2v8l-4-4zM41 2v8l4-4zM57 2v8l4-4zM61 2h1v8h-1z" /></svg>
        </StatusCell>
        <StatusCell $w={68}>
          <svg width="66" height="12" fill="#bdbdbd">
            <path d="M8 1h3v3H8zM12 1h3v3h-3zM16 1h3v3h-3zM8 5h3v3H8zM12 5h3v3h-3zM16 5h3v3h-3zM8 9h3v3H8zM12 9h3v3h-3zM16 9h3v3h-3zM29 1h11v7H29zM29 9h3v3h-3zM33 9h3v3h-3zM37 9h3v3h-3z" />
            <path d="M50 1h11v11H50z" fill="#666" />
          </svg>
        </StatusCell>
      </Status>
      <Taskbar>
        <Start><svg width="17" height="17" fill="#fff"><path d="M0 2.500l7-1V8H0zM8 1.300L17 0v8H8zM0 9h7v6.500l-7-1zM8 9h9v8l-9-1.300z" /></svg></Start>
        <Search>
          <svg width="17" height="17" fill="none" stroke="#222" strokeWidth="1.300"><circle cx="10.500" cy="6" r="5" /><path d="M7 9.500L1 16" /></svg>
          Type here to search
        </Search>
        <TaskIcons />
        <Tray>
          <svg width="90" height="24" fill="none" stroke="#eee" strokeWidth="1.200">
            <path d="M1 14.500L7 9l6 5.500" />
            <path d="M23.500 17V6l14-2v12M23.500 17h8" /><path d="M28 10.500c1-3 5-3 6-.500M33.500 12c-1 2.500-4.500 2.500-5.500 0" /><circle cx="35.500" cy="16" r="3.300" fill="#e81123" stroke="none" />
            <path d="M50 18A11 11 0 0 1 61 7M53 18.500a8 8 0 0 1 8-8M56 18.500a5 5 0 0 1 5-5M59 18.500a2 2 0 0 1 2-2" />
            <path d="M71.500 9.500h2.500L78 5.500v13l-4-4h-2.500z" /><path d="M80.500 9.500q2 2.500 0 5M83 7.500q3 4.500 0 9" /><path d="M85.500 5.500q4 6.500 0 13" stroke="#777" />
          </svg>
          <TrayText $w={37}>ENG<br />IN</TrayText>
          <TrayText $w={62}>7:54 AM<br />4/22/2023</TrayText>
          <svg width="51" height="30">
            <path d="M13 5h16v13H17.500L14 21.500V18h-1z" fill="#fff" /><path d="M16 8.500h10M16 11.500h10M16 14.500h7" stroke="#1b2230" />
            <circle cx="28.500" cy="20.500" r="8" fill="#3a3d45" stroke="#aaa" /><text x="28" y="24.500" fill="#fff" fontSize="11" fontWeight="600" textAnchor="middle" fontFamily={system}>11</text>
          </svg>
          <Edge />
        </Tray>
      </Taskbar>
    </Window>
  );
}
